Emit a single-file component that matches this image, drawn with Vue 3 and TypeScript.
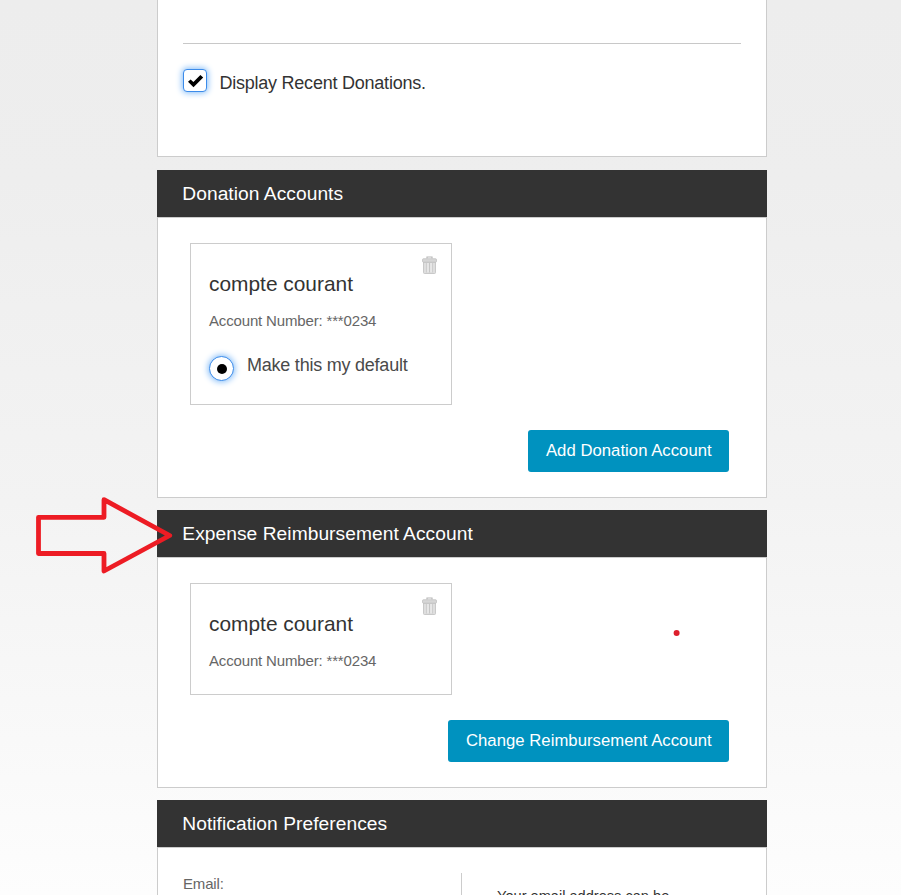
<script setup lang="ts">
interface Account {
  name: string
  number: string
  selectable: boolean
}
interface Section {
  title: string
  account: Account
  action: string
}

const sections: Section[] = [
  {
    title: 'Donation Accounts',
    account: { name: 'compte courant', number: '***0234', selectable: true },
    action: 'Add Donation Account',
  },
  {
    title: 'Expense Reimbursement Account',
    account: { name: 'compte courant', number: '***0234', selectable: false },
    action: 'Change Reimbursement Account',
  },
]
</script>

<template>
  <main class="page">
    <section class="panel recent">
      <label class="check-row">
        <span class="checkbox">
          <svg width="22" height="22" viewBox="0 0 22 22">
            <path d="M4 11.8 L6.6 9.4 L9.4 12 L16.4 5 L19.2 7.6 L9.5 17.2 Z" fill="#000" />
          </svg>
        </span>
        <span class="check-label">Display Recent Donations.</span>
      </label>
    </section>

    <section v-for="section in sections" :key="section.title" class="group">
      <h2 class="heading">{{ section.title }}</h2>
      <div class="panel body">
        <article class="card" :class="{ 'card-tall': section.account.selectable }">
          <svg class="trash" width="15" height="18" viewBox="0 0 15 18">
            <path d="M5 2.5 V1 H10 V2.5" fill="none" stroke="#b8b8b8" stroke-width="1.2" />
            <path d="M1.5 6 H13.5 V16.6 Q13.5 17.5 12.6 17.5 H2.4 Q1.5 17.5 1.5 16.6 Z" fill="#dedede" stroke="#c4c4c4" stroke-width=".9" />
            <rect x=".5" y="2.7" width="14" height="3.5" rx="1" fill="#d6d6d6" stroke="#bcbcbc" stroke-width=".7" />
            <path d="M4.5 7 V16.5 M10.5 7 V16.5" stroke="#cecece" stroke-width="1" />
            <path d="M7.5 7 V16.5" stroke="#c6c6c6" stroke-width="1.2" />
            <path d="M6 7 V16 M9 7 V16" stroke="#efefef" stroke-width="1" />
          </svg>
          <h3 class="name">{{ section.account.name }}</h3>
          <p class="number">Account Number: {{ section.account.number }}</p>
          <label v-if="section.account.selectable" class="radio-row">
            <span class="radio"><span class="radio-dot"></span></span>
            <span class="radio-label">Make this my default</span>
          </label>
        </article>
        <button class="action" type="button">{{ section.action }}</button>
      </div>
    </section>

    <section class="group">
      <h2 class="heading">Notification Preferences</h2>
      <div class="panel preferences">
        <div class="email">Email:</div>
        <div class="note">Your email address can be</div>
      </div>
    </section>

    <svg class="annotations" width="901" height="895" viewBox="0 0 901 895">
      <path
        d="M38.5 517.3 H104 V499.7 L169.7 535.5 L104 571 V553.5 H38.5 Z"
        fill="none"
        stroke="#ed1c24"
        stroke-width="4.8"
        stroke-linejoin="round"
      />
      <circle cx="676.6" cy="633" r="3" fill="#dd1f2d" />
    </svg>
  </main>
</template>

<style>
body {
  margin: 0;
  overflow: hidden;
}
</style>

<style scoped>
.page {
  position: relative;
  box-sizing: border-box;
  width: 901px;
  height: 895px;
  padding-left: 157px;
  overflow: hidden;
  font-family: 'Liberation Sans', Arial, sans-serif;
  color: #333;
  background: linear-gradient(#ededed 0%, #eee 20%, #f3f3f3 56%, #fafafa 87%, #fdfdfd 100%);
}
.panel {
  box-sizing: border-box;
  width: 610px;
  background: #fff;
  border: 1px solid #ccc;
}
.recent {
  height: 157px;
  margin-bottom: 13px;
  padding: 43px 25px 0;
  border-top: 0;
}
.check-row {
  display: flex;
  padding-top: 25px;
  border-top: 1px solid #c8c8c8;
}
.checkbox {
  box-sizing: border-box;
  width: 24px;
  height: 23px;
  background: #fff;
  border: 1px solid #3b8bea;
  border-radius: 4px;
  box-shadow: 0 0 6px 1px #83bcf8;
}
.checkbox svg {
  display: block;
}
.check-label {
  margin: 4px 0 0 12.4px;
  font-size: 18px;
  line-height: 20px;
  letter-spacing: -0.23px;
}
.group {
  width: 610px;
  margin-bottom: 12px;
}
.heading {
  height: 47px;
  margin: 0;
  padding-left: 25.3px;
  font-size: 19.2px;
  font-weight: 400;
  line-height: 47px;
  letter-spacing: 0.05px;
  color: #fff;
  background: #333;
}
.body {
  display: flex;
  flex-direction: column;
  padding: 25px 37px 25px 32px;
}
.card {
  position: relative;
  box-sizing: border-box;
  width: 262px;
  height: 112px;
  padding: 28px 18px 0;
  border: 1px solid #ccc;
}
.card-tall {
  height: 162px;
}
.trash {
  position: absolute;
  top: 13px;
  right: 14px;
}
.card-tall .trash {
  top: 12px;
}
.name {
  margin: 0;
  font-size: 20.9px;
  font-weight: 400;
  line-height: 24px;
}
.number {
  margin: 16px 0 0;
  font-size: 15px;
  line-height: 18px;
  letter-spacing: -0.16px;
  color: #666;
}
.radio-row {
  display: flex;
  align-items: flex-start;
  margin-top: 25px;
}
.radio {
  box-sizing: border-box;
  display: flex;
  align-items: center;
  justify-content: center;
  width: 25px;
  height: 25px;
  margin-top: 1px;
  background: #fff;
  border: 1px solid #3b8bea;
  border-radius: 50%;
  box-shadow: 0 0 6px 1px #83bcf8;
}
.radio-dot {
  width: 10px;
  height: 10px;
  background: #000;
  border-radius: 50%;
}
.radio-label {
  margin-left: 13px;
  font-size: 18px;
  line-height: 20px;
  letter-spacing: -0.23px;
  color: #4a4a4a;
}
.action {
  align-self: flex-end;
  height: 42px;
  margin: 25px 0 0;
  padding: 0 17.3px 0 17.6px;
  font-family: inherit;
  font-size: 16.7px;
  line-height: 42px;
  letter-spacing: 0.03px;
  color: #fff;
  background: #0092bf;
  border: 0;
  border-radius: 3px;
}
.preferences {
  display: flex;
  height: 200px;
  padding: 25px 25px 0;
}
.email {
  box-sizing: border-box;
  width: 279px;
  padding-top: 2px;
  font-size: 15px;
  line-height: 18px;
  letter-spacing: -0.16px;
  color: #666;
  border-right: 1px solid #ccc;
}
.note {
  padding: 14px 0 0 35px;
  font-size: 14.6px;
  line-height: 18px;
}
.annotations {
  position: absolute;
  top: 0;
  left: 0;
  pointer-events: none;
}
</style>
